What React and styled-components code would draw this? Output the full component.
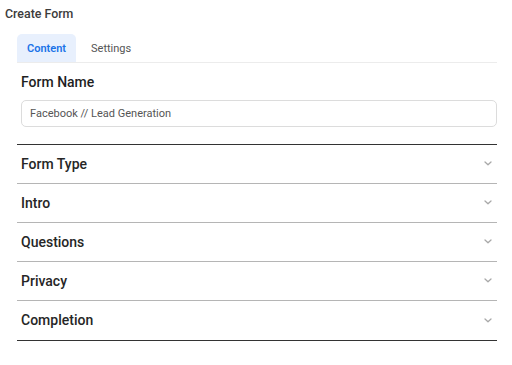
import React from "react";
import styled, { createGlobalStyle } from "styled-components";

const Global = createGlobalStyle`
  html, body { margin: 0; padding: 0; background: #fff; }
  body { font-family: Roboto, "Liberation Sans", Arial, sans-serif; }
  * { box-sizing: border-box; }
`;

const Page = styled.div`
  padding: 6px 0 0 5px;
  width: 512px;
`;

const Title = styled.h1`
  margin: 0;
  font-size: 12.4px;
  line-height: 16px;
  font-weight: 500;
  color: #3c3c3c;
`;

const Panel = styled.div`
  margin: 12px 0 0 12px;
  width: 480px;
  display: flex;
  flex-direction: column;
`;

const TabBar = styled.div`
  display: flex;
  gap: 5px;
  border-bottom: 1px solid #ececec;
`;

const Tab = styled.button`
  border: none;
  background: ${(p) => (p.$active ? "#e8f0fd" : "transparent")};
  color: ${(p) => (p.$active ? "#1a73e8" : "#555")};
  font-family: inherit;
  font-size: 11px;
  font-weight: ${(p) => (p.$active ? 600 : 400)};
  height: 28px;
  padding: 0 10px;
  border-radius: 5px 5px 0 0;
  cursor: pointer;
`;

const Field = styled.div`
  padding: 9px 0 0 4px;
  display: flex;
  flex-direction: column;
  gap: 8px;
`;

const Label = styled.label`
  font-size: 14px;
  line-height: 20px;
  font-weight: 500;
  color: #1f1f1f;
`;

const Input = styled.input`
  height: 27px;
  width: 476px;
  border: 1px solid #dcdcdc;
  border-radius: 5px;
  padding: 0 8px;
  font-family: inherit;
  font-size: 11px;
  color: #555;
  outline: none;
`;

const Accordion = styled.div`
  margin-top: 17px;
  border-top: 1px solid #333;
  border-bottom: 1px solid #333;
  display: flex;
  flex-direction: column;
`;

const Row = styled.div`
  height: 39px;
  border-bottom: ${(p) => (p.$last ? "none" : "1px solid #b5b5b5")};
  display: flex;
  align-items: center;
  justify-content: space-between;
  padding: 0 5px 0 4px;
`;

const RowTitle = styled.span`
  font-size: 14px;
  font-weight: 500;
  color: #262626;
  margin-top: -1px;
`;

const Chevron = styled.svg`
  width: 8px;
  height: 5px;
  margin-top: -1px;
`;

const sections = ["Form Type", "Intro", "Questions", "Privacy", "Completion"];

export default function App() {
  return (
    <>
      <Global />
      <Page>
        <Title>Create Form</Title>
        <Panel>
          <TabBar>
            <Tab $active>Content</Tab>
            <Tab>Settings</Tab>
          </TabBar>
          <Field>
            <Label>Form Name</Label>
            <Input defaultValue="Facebook // Lead Generation" />
          </Field>
          <Accordion>
            {sections.map((s, i) => (
              <Row key={s} $last={i === sections.length - 1}>
                <RowTitle>{s}</RowTitle>
                <Chevron viewBox="0 0 8 5">
                  <path d="M1 1 L4 3.8 L7 1" fill="none" stroke="#a8a8a8" strokeWidth="1.3" strokeLinecap="round" strokeLinejoin="round" />
                </Chevron>
              </Row>
            ))}
          </Accordion>
        </Panel>
      </Page>
    </>
  );
}
